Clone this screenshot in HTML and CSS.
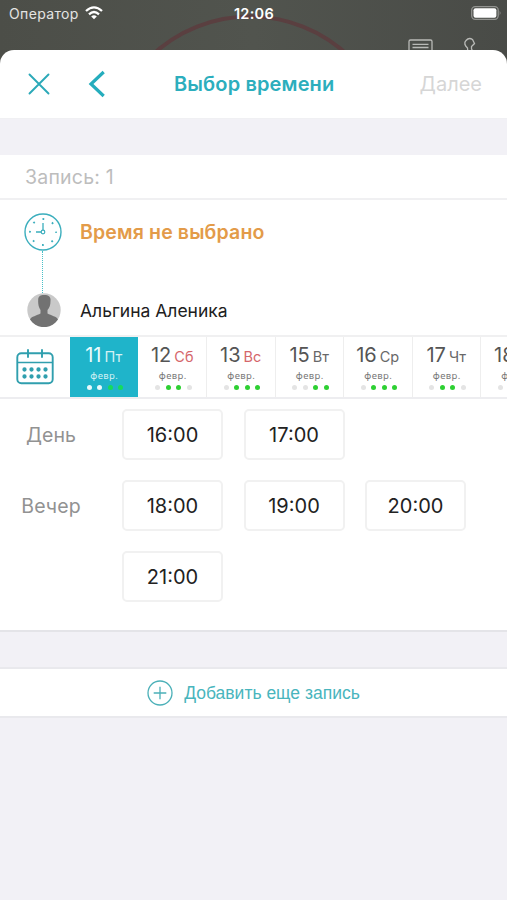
FILE: index.html
```html
<!DOCTYPE html>
<html lang="ru">
<head>
<meta charset="utf-8">
<title>Выбор времени</title>
<link rel="stylesheet" href="styles.css">
</head>
<body>
<div class="screen">
  <header class="status">
    <svg class="backdrop" width="507" height="70" viewBox="0 0 507 70" fill="none">
      <circle cx="250" cy="160" r="143.500" stroke="#5a3f40" stroke-width="4"/>
      <g stroke="#b9bab7" stroke-width="1.300">
        <path d="M409 60V41.500Q409 40 410.500 40H430.500Q432 40 432 41.500V60M412.500 44.300H428.500M412.500 47.500H428.500"/>
        <path d="M468 54L467.500 48C465 45.500 463.500 43 466 40.500Q469 37 472.500 39.500L474.500 43.500L471.500 46.500V49L474 53"/>
      </g>
    </svg>
    <span class="carrier">Оператор</span>
    <svg class="wifi" width="18" height="14" viewBox="0 0 18 14" fill="none" stroke="#fff" stroke-width="2.300">
      <path d="M1 5Q9-2.200 17 5M4 8.300Q9 3.800 14 8.300"/>
      <path d="M9 13.200L6.200 10.400Q9 8.200 11.800 10.400Z" fill="#fff" stroke="none"/>
    </svg>
    <span class="clock">12:06</span>
    <svg class="battery" width="31" height="14" viewBox="0 0 31 14">
      <rect x=".7" y=".7" width="26.500" height="12.600" rx="3.500" fill="none" stroke="#929390" stroke-width="1.300"/>
      <rect x="2.500" y="2.300" width="22.900" height="9.400" rx="2" fill="#fff"/>
      <path d="M28.700 4.500Q30.500 7 28.700 9.500Z" fill="#929390"/>
    </svg>
  </header>

  <nav class="bar">
    <svg class="close" width="22" height="22" viewBox="0 0 22 22" fill="none" stroke="#2ba9b8" stroke-width="1.900" stroke-linecap="round"><path d="M1.500 1.500L20.500 20.500M20.500 1.500L1.500 20.500"/></svg>
    <svg class="back" width="18" height="28" viewBox="0 0 18 28" fill="none" stroke="#25adbd" stroke-width="3.200"><path d="M15.700 2L3 14L15.700 26"/></svg>
    <h1 class="title">Выбор времени</h1>
    <span class="next">Далее</span>
  </nav>

  <main class="card">
    <h2 class="record">Запись: 1</h2>
    <section class="summary">
      <div class="line">
        <svg class="dial" width="38" height="38" viewBox="0 0 38 38" fill="none" stroke="#3baebd">
          <circle cx="19" cy="19" r="18" stroke-width="1.400"/>
          <circle cx="19" cy="19" r="1.800" stroke-width="1.200"/>
          <path d="M19 10V17M12 19H17" stroke-width="1.300"/>
          <circle cx="19" cy="19" r="13" stroke-width="1.800" stroke-dasharray="1.800 8.410" stroke-dashoffset=".9"/>
        </svg>
        <strong class="warning">Время не выбрано</strong>
      </div>
      <div class="connector"></div>
      <div class="line person-line">
        <svg class="avatar" width="34" height="34" viewBox="0 0 34 34">
          <circle cx="17" cy="17" r="16.700" fill="#c9c9c9"/>
          <path d="M3 26.500C4 23.500 10 22.500 13.500 20.500V17C11.500 14 11 11 11.200 7C11 3 14 1.800 17.500 2C22 2 24 4 23.500 8C23.500 12 22.500 15 20.500 17V20.500C24 22.500 30 23.500 31 26.500C24 36.700 10 36.700 3 26.500Z" fill="#727272"/>
        </svg>
        <span class="person">Альгина Аленика</span>
      </div>
    </section>

    <section class="days">
      <div class="calendar">
        <svg width="38" height="36" viewBox="0 0 38 36" fill="none" stroke="#309fae" stroke-width="1.900">
          <rect x="1.300" y="4.300" width="35.400" height="30" rx="4"/>
          <path d="M1.300 13.500H36.700" stroke-width="1.500"/>
          <path d="M12 1V8M26 1V8" stroke-linecap="round"/>
          <path d="M8.500 20.500h.01M15.500 20.500h.01M22.500 20.500h.01M29.500 20.500h.01M8.500 27.500h.01M15.500 27.500h.01M22.500 27.500h.01M29.500 27.500h.01" stroke-width="4.300" stroke-linecap="round"/>
        </svg>
      </div>
      <div class="day active"><div class="date"><b>11</b><i>Пт</i></div><small>февр.</small><div class="dots"><u></u><u></u><u class="on"></u><u class="on"></u></div></div>
      <div class="day weekend"><div class="date"><b>12</b><i>Сб</i></div><small>февр.</small><div class="dots"><u></u><u class="on"></u><u class="on"></u><u></u></div></div>
      <div class="day weekend"><div class="date"><b>13</b><i>Вс</i></div><small>февр.</small><div class="dots"><u></u><u class="on"></u><u class="on"></u><u class="on"></u></div></div>
      <div class="day"><div class="date"><b>15</b><i>Вт</i></div><small>февр.</small><div class="dots"><u></u><u></u><u class="on"></u><u class="on"></u></div></div>
      <div class="day"><div class="date"><b>16</b><i>Ср</i></div><small>февр.</small><div class="dots"><u></u><u class="on"></u><u class="on"></u><u class="on"></u></div></div>
      <div class="day"><div class="date"><b>17</b><i>Чт</i></div><small>февр.</small><div class="dots"><u></u><u class="on"></u><u class="on"></u><u></u></div></div>
      <div class="day"><div class="date"><b>18</b><i>Пт</i></div><small>февр.</small><div class="dots"><u></u><u class="on"></u><u class="on"></u><u></u></div></div>
    </section>

    <section class="times">
      <span class="part">День</span>
      <div class="slots"><span class="slot">16:00</span><span class="slot">17:00</span></div>
      <span class="part">Вечер</span>
      <div class="slots"><span class="slot">18:00</span><span class="slot">19:00</span><span class="slot">20:00</span><span class="slot">21:00</span></div>
    </section>
  </main>

  <div class="add">
    <svg width="26" height="26" viewBox="0 0 26 26" fill="none" stroke="#4bb0b8" stroke-width="1.300"><circle cx="13" cy="13" r="12"/><path d="M13 6.700V19.300M6.700 13H19.300"/></svg>
    <span>Добавить еще запись</span>
  </div>
</div>
</body>
</html>
```

FILE: styles.css
```css
* { box-sizing: border-box; }
body { margin: 0; font-family: Inter, "Liberation Sans", sans-serif; background: #f2f1f6; }
.screen { width: 507px; height: 900px; overflow: hidden; background: #f2f1f6; }

.status { position: relative; height: 70px; margin-bottom: -20px; padding: 0 5px 0 9px; display: grid; grid-template-columns: 76px 139px 60px 1fr; align-items: start; background: linear-gradient(90deg, #4c4e48, #51544e 50%, #494b47); color: #fff; }
.backdrop { position: absolute; top: 0; left: 0; }
.status > :not(.backdrop) { position: relative; }
.carrier { font-size: 14px; line-height: 28px; letter-spacing: .35px; color: #e4e4e2; white-space: nowrap; }
.wifi { margin-top: 6px; }
.clock { font-size: 14.500px; font-weight: 600; line-height: 28px; letter-spacing: .3px; text-align: center; }
.battery { margin-top: 6px; justify-self: end; }

.bar { position: relative; height: 69px; display: flex; align-items: center; padding: 0 25px 0 28px; border-radius: 14px 14px 0 0; background: #fff; border-bottom: 1px solid #f0f0f3; }
.back { margin-left: 38px; }
.title { margin: 0 0 0 68px; font-size: 20px; font-weight: 600; letter-spacing: .13px; color: #2caebd; white-space: nowrap; }
.next { margin-left: auto; font-size: 20px; color: #d6d6d6; }

.card { height: 477px; margin-top: 36px; background: #fff; border-bottom: 2px solid #e4e4e8; }
.record { height: 45px; margin: 0; padding-left: 25px; border-bottom: 2px solid #f0f0f2; font-size: 19.500px; font-weight: 400; line-height: 45px; letter-spacing: .2px; color: #bdbdbd; }
.summary { height: 135px; padding: 13px 0 0 24px; }
.line { display: flex; align-items: center; height: 38px; }
.warning { margin-left: 18px; font-size: 19.500px; font-weight: 600; letter-spacing: .15px; color: #e39b49; }
.connector { width: 0; height: 42px; margin-left: 18px; border-left: 1px dotted #48bfc7; }
.person-line { height: 34px; }
.avatar { margin-left: 3px; margin-right: 19px; }
.person { font-size: 17.500px; color: #202020; }

.days { height: 64px; display: flex; border-top: 2px solid #f0f0f1; border-bottom: 2px solid #ededf0; overflow: hidden; }
.calendar { width: 70px; flex: none; padding: 12px 0 0 16px; }
.day { width: 68.500px; flex: none; border-right: 1px solid #eee; display: flex; flex-direction: column; align-items: center; color: #555; }
.date { display: flex; align-items: baseline; gap: 3px; height: 32px; line-height: 36px; white-space: nowrap; }
.date b { font-size: 20px; font-weight: 400; }
.date i { font-size: 14.500px; font-style: normal; color: #686868; }
.weekend i { color: #d5666b; }
.day small { font-family: "Noto Sans", sans-serif; font-size: 9.500px; line-height: 14px; height: 14px; letter-spacing: .4px; margin-left: 1px; color: #777; }
.dots { display: flex; gap: 5.500px; margin: 2px 0 0 2px; }
.dots u { width: 5px; height: 5px; border-radius: 50%; background: #e4e4e4; }
.dots .on { background: #2ed033; }
.active { background: #1fb4ca; border-color: #fff; color: #e9fafc; }
.active i, .active small { color: #d4f1f4; }
.active u { background: #e8f9fb; }
.active .on { background: #16db5c; }

.times { display: grid; grid-template-columns: 102px 1fr; row-gap: 20px; padding-top: 10px; }
.part { font-size: 19.500px; line-height: 53px; height: 51px; letter-spacing: .1px; text-align: center; color: #929292; }
.slots { display: flex; flex-wrap: wrap; gap: 20px 20.500px; padding-left: 20px; }
.slot { width: 101px; height: 51px; border: 2px solid #f1f1f1; border-radius: 5px; text-align: center; font-size: 20px; line-height: 49px; color: #222; }

.add { height: 51px; margin-top: 35px; display: flex; align-items: center; justify-content: center; gap: 11px; background: #fff; border-top: 2px solid #e9e9ed; border-bottom: 2px solid #e9e9ed; font-family: "Liberation Sans", Arial, sans-serif; font-size: 17.500px; color: #49b5bd; }
.add span { padding-top: 2px; }
```
